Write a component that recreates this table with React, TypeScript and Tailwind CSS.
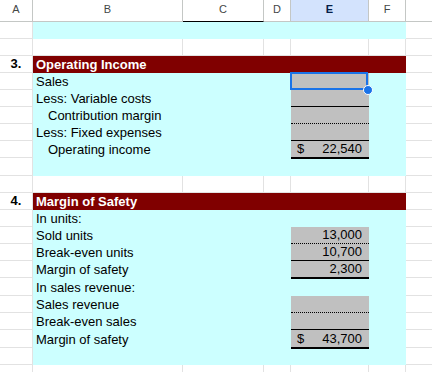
import React from 'react';

type Edge = 'solid' | 'dotted' | 'double';
type ECell = { dollar?: boolean; value?: string; edge?: Edge; selected?: boolean };
type Row = { tall?: boolean; kind: 'cyan' | 'white' | 'title'; num?: string; label?: string; indent?: boolean; e?: ECell };

const rows: Row[] = [
  { kind: 'cyan' },
  { kind: 'white' },
  { kind: 'title', num: '3.', label: 'Operating Income' },
  { kind: 'cyan', label: 'Sales', e: { selected: true } },
  { kind: 'cyan', label: 'Less: Variable costs', e: { edge: 'solid' } },
  { kind: 'cyan', label: 'Contribution margin', indent: true, e: { edge: 'dotted' } },
  { kind: 'cyan', label: 'Less: Fixed expenses', e: { edge: 'solid' } },
  { kind: 'cyan', label: 'Operating income', indent: true, e: { dollar: true, value: '22,540', edge: 'double' } },
  { kind: 'cyan', tall: true },
  { kind: 'white' },
  { kind: 'title', num: '4.', label: 'Margin of Safety' },
  { kind: 'cyan', label: 'In units:' },
  { kind: 'cyan', label: 'Sold units', e: { value: '13,000', edge: 'dotted' } },
  { kind: 'cyan', label: 'Break-even units', e: { value: '10,700', edge: 'solid' } },
  { kind: 'cyan', label: 'Margin of safety', e: { value: '2,300', edge: 'double' } },
  { kind: 'cyan', tall: true, label: 'In sales revenue:' },
  { kind: 'cyan', label: 'Sales revenue', e: { edge: 'dotted' } },
  { kind: 'cyan', label: 'Break-even sales', e: { edge: 'solid' } },
  { kind: 'cyan', tall: true, label: 'Margin of safety', e: { dollar: true, value: '43,700', edge: 'double' } },
  { kind: 'cyan' },
  { kind: 'white' },
];

const grid = 'border-r border-b border-[#e2e2e2]';

const HeaderRow = () => (
  <div className="flex h-[22px] text-[11px] text-[#444746]">
    <div className="w-[33px] flex items-center justify-center pb-[2px] border-r border-b border-[#c4c7c5]">A</div>
    <div className="w-[150px] flex items-center justify-center pb-[2px] border-r border-b border-[#c4c7c5]">B</div>
    <div className="w-[81px] flex items-center justify-center pb-[2px] border-r border-[#c4c7c5] border-b border-b-black">C</div>
    <div className="w-[27px] flex items-center justify-center pb-[2px] border-r border-b border-[#c4c7c5]">D</div>
    <div className="w-[78px] flex items-center justify-center pb-[2px] border-r border-b border-[#c4c7c5] bg-[#d3e3fd] font-bold text-[#041e49]">E</div>
    <div className="w-[37px] flex items-center justify-center pb-[2px] border-r border-b border-[#c4c7c5]">F</div>
    <div className="flex-1 border-b border-[#c4c7c5]" />
  </div>
);

const ValueCell = ({ e }: { e?: ECell }) => {
  if (!e) return <div className="w-[78px] bg-[#ccffff]" />;
  const edge =
    e.edge === 'dotted' ? 'border-b border-dotted border-black' : e.edge ? 'border-b border-black' : '';
  return (
    <div
      className={`relative w-[78px] bg-[#c0c0c0] flex items-end pb-px pl-[6px] pr-[7px] ${
        e.dollar ? 'justify-between' : 'justify-end'
      } ${edge}`}
    >
      {e.dollar && <span>$</span>}
      {e.value && <span>{e.value}</span>}
      {e.edge === 'double' && <div className="absolute inset-x-0 -bottom-[2px] h-px bg-black z-10" />}
      {e.selected && (
        <>
          <div className="absolute -top-px bottom-0 -left-px right-px border-2 border-[#1a73e8] z-10" />
          <div className="absolute -right-[4px] -bottom-[5px] w-[10px] h-[10px] rounded-full bg-[#1a73e8] border border-white z-20" />
        </>
      )}
    </div>
  );
};

const SheetRow = ({ row }: { row: Row }) => {
  const h = row.tall ? 'h-[18px]' : 'h-[17px]';

  if (row.kind === 'white') {
    return (
      <div className={`flex ${h}`}>
        <div className={`w-[33px] ${grid}`} />
        <div className={`w-[150px] ${grid}`} />
        <div className={`w-[81px] ${grid}`} />
        <div className={`w-[27px] ${grid}`} />
        <div className={`w-[78px] ${grid}`} />
        <div className={`w-[37px] ${grid}`} />
        <div className="flex-1 border-b border-[#e2e2e2]" />
      </div>
    );
  }

  if (row.kind === 'title') {
    return (
      <div className={`flex ${h}`}>
        <div className={`w-[33px] ${grid} flex items-end justify-center pb-px font-bold`}>{row.num}</div>
        <div className="w-[373px] bg-[#800000] text-white font-bold flex items-end pb-px pl-[3px] whitespace-nowrap">
          {row.label}
        </div>
        <div className="flex-1 border-b border-[#e2e2e2]" />
      </div>
    );
  }

  return (
    <div className={`flex ${h}`}>
      <div className={`w-[33px] ${grid}`} />
      <div
        className={`w-[150px] bg-[#ccffff] flex items-end pb-px whitespace-nowrap ${
          row.indent ? 'pl-[15px]' : 'pl-[3px]'
        }`}
      >
        {row.label}
      </div>
      <div className="w-[81px] bg-[#ccffff]" />
      <div className="w-[27px] bg-[#ccffff]" />
      <ValueCell e={row.e} />
      <div className="w-[37px] bg-[#ccffff]" />
      <div className="flex-1 border-b border-[#e2e2e2]" />
    </div>
  );
};

export default function App() {
  return (
    <div className="w-[432px] h-[372px] overflow-hidden bg-white text-black text-[13px] leading-[15px] font-['Liberation_Sans',Arial,sans-serif]">
      <HeaderRow />
      {rows.map((row, i) => (
        <SheetRow key={i} row={row} />
      ))}
    </div>
  );
}
